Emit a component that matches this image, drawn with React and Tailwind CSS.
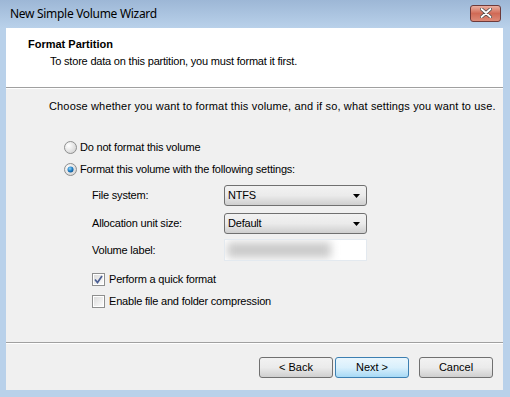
import React from "react";

const body = { fontFamily: '"Liberation Sans", Arial, sans-serif' };

function Radio({ checked }) {
  return (
    <svg width="13" height="13" viewBox="0 0 13 13" className="shrink-0">
      <defs>
        <radialGradient id={checked ? "rc" : "ru"} cx="0.35" cy="0.35" r="0.8">
          <stop offset="0" stopColor="#ffffff" />
          <stop offset="1" stopColor="#cfcfcf" />
        </radialGradient>
        <radialGradient id="dot" cx="0.4" cy="0.35" r="0.7">
          <stop offset="0" stopColor="#8fd3f7" />
          <stop offset="0.6" stopColor="#1f7ec4" />
          <stop offset="1" stopColor="#0b4f8c" />
        </radialGradient>
      </defs>
      <circle cx="6.5" cy="6.5" r="6" fill={`url(#${checked ? "rc" : "ru"})`} stroke="#8e8f8f" />
      {checked && <circle cx="6.5" cy="6.5" r="3" fill="url(#dot)" />}
    </svg>
  );
}

function Check({ checked }) {
  return (
    <div className="w-[13px] h-[13px] border border-[#8e8f8f] bg-white p-[1px] shrink-0">
      <div className="w-full h-full bg-gradient-to-br from-[#dcdcdc] to-[#fbfbfb] flex items-center justify-center">
        {checked && (
          <svg width="9" height="9" viewBox="0 0 9 9">
            <path d="M1 4.5 L3.5 7.5 L8 1" fill="none" stroke="#4b5f94" strokeWidth="1.7" />
          </svg>
        )}
      </div>
    </div>
  );
}

function Combo({ value }) {
  return (
    <div className="w-[143px] h-[21px] rounded-[3px] border border-[#707070] bg-gradient-to-b from-[#f2f2f2] via-[#ebebeb] to-[#cfcfcf] flex items-center justify-between pl-[3px] pr-[6px] text-[11px] text-black">
      <span>{value}</span>
      <svg width="7" height="4" viewBox="0 0 7 4">
        <path d="M0 0 H7 L3.5 4 Z" fill="#000" />
      </svg>
    </div>
  );
}

function Button({ children, primary }) {
  return (
    <div
      className={
        "w-[74px] h-[21px] rounded-[3px] border flex items-center justify-center text-[11px] text-black " +
        (primary
          ? "border-[#3c7fb1] bg-gradient-to-b from-[#eaf6fd] via-[#d9f0fc] to-[#a7d9f5]"
          : "border-[#707070] bg-gradient-to-b from-[#f2f2f2] via-[#ebebeb] to-[#cfcfcf]")
      }
    >
      {children}
    </div>
  );
}

export default function App() {
  return (
    <div className="w-[510px] h-[397px] bg-[#b9d1ea] flex flex-col overflow-hidden" style={body}>
      {/* title bar */}
      <div className="h-[28px] bg-gradient-to-b from-[#9db7d6] to-[#b9d1ea] flex items-center justify-between pl-[10px] pr-[9px]">
        <span className="text-[12px] tracking-[-0.3px] text-black" style={{ fontFamily: '"Noto Sans", "Open Sans", sans-serif' }}>
          New Simple Volume Wizard
        </span>
        <div className="w-[31px] h-[17px] mb-[2px] rounded-[3px] border border-[#6d3a3a] bg-gradient-to-b from-[#eab0a2] via-[#d06a56] to-[#dc8a78] flex items-center justify-center">
          <svg width="12" height="10" viewBox="0 0 12 10">
            <path d="M1.5 1 L10.5 9 M10.5 1 L1.5 9" stroke="#4a4a4a" strokeWidth="3.4" strokeLinecap="round" />
            <path d="M1.5 1 L10.5 9 M10.5 1 L1.5 9" stroke="#ffffff" strokeWidth="1.8" strokeLinecap="round" />
          </svg>
        </div>
      </div>

      {/* client area */}
      <div className="ml-[6px] w-[497px] h-[362px] flex flex-col bg-[#f0f0f0]">
        <div className="h-[59px] bg-white pl-[22px] pt-[10px] text-[11px] text-black leading-[13px]">
          <div className="font-bold">Format Partition</div>
          <div className="pl-[22px] mt-[4px] tracking-[-0.2px]">To store data on this partition, you must format it first.</div>
        </div>
        <div className="h-[1px] bg-[#a0a0a0]" />
        <div className="h-[1px] bg-white" />

        <div className="h-[253px] text-[11px] text-black leading-[13px] tracking-[-0.2px]">
          <div className="pl-[43px] pt-[11px] tracking-[0.15px]">
            Choose whether you want to format this volume, and if so, what settings you want to use.
          </div>

          <div className="pl-[58px] mt-[28px] flex flex-col gap-[9px]">
            <div className="flex items-center gap-[3px]">
              <Radio />
              <span>Do not format this volume</span>
            </div>
            <div className="flex items-center gap-[3px]">
              <Radio checked />
              <span>Format this volume with the following settings:</span>
            </div>
          </div>

          <div className="pl-[86px] mt-[9px] flex flex-col">
            <div className="flex items-center h-[21px]">
              <span className="w-[132px]">File system:</span>
              <Combo value="NTFS" />
            </div>
            <div className="flex items-center h-[21px] mt-[7px]">
              <span className="w-[132px]">Allocation unit size:</span>
              <Combo value="Default" />
            </div>
            <div className="flex items-center h-[22px] mt-[5px]">
              <span className="w-[132px]">Volume label:</span>
              <div className="w-[143px] h-[22px] border border-[#e3e9ef] bg-white overflow-hidden flex items-center pl-[2px]">
                <div className="w-[104px] h-[16px] bg-[#cbcbcb] blur-[4px]" />
              </div>
            </div>

            <div className="flex flex-col gap-[9px] mt-[12px]">
              <div className="flex items-center gap-[4px]">
                <Check checked />
                <span>Perform a quick format</span>
              </div>
              <div className="flex items-center gap-[4px]">
                <Check />
                <span>Enable file and folder compression</span>
              </div>
            </div>
          </div>
        </div>

        <div className="h-[1px] bg-[#a0a0a0]" />
        <div className="h-[1px] bg-white" />

        <div className="flex-1 flex items-start pt-[13px] pl-[253px]">
          <Button>&lt; Back</Button>
          <div className="ml-[2px]">
            <Button primary>Next &gt;</Button>
          </div>
          <div className="ml-[10px]">
            <Button>Cancel</Button>
          </div>
        </div>
      </div>
    </div>
  );
}
